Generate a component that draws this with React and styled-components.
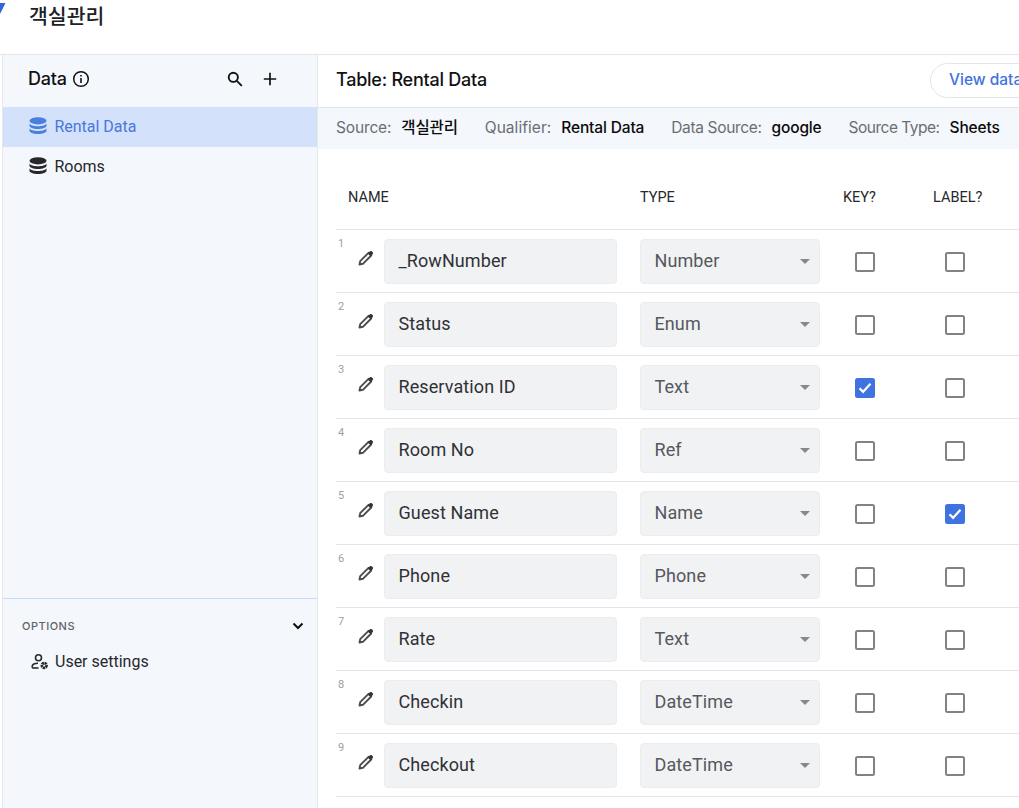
import React from 'react';
import styled, { createGlobalStyle } from 'styled-components';

const Global = createGlobalStyle`
  html, body { margin: 0; padding: 0; height: 100%; overflow: hidden; background: #fff; }
  body { font-family: Roboto, "Noto Sans CJK KR", sans-serif; }
  * { box-sizing: border-box; }
`;

const Page = styled.div`
  width: 1019px; height: 808px; display: flex; flex-direction: column; overflow: hidden; position: relative;
`;
const TopBar = styled.header`
  height: 55px; flex: none; border-bottom: 1px solid #e6e7e9; display: flex; align-items: flex-start;
  padding-left: 29px; position: relative;
`;
const LogoMark = styled.svg`
  position: absolute; left: 0; top: 3px; width: 6px; height: 11px;
`;
const AppTitle = styled.h1`
  margin: 2px 0 0; font: 500 20.5px/26px "Noto Sans CJK KR", sans-serif; color: #202124;
`;
const Body = styled.div`
  flex: 1; display: flex; min-height: 0;
`;
const Sidebar = styled.aside`
  margin-left: 2px; width: 316px; flex: none; background: #f4f7fc;
  border-left: 1px solid #e6e8ec; border-right: 1px solid #e6e8ec; display: flex; flex-direction: column;
`;
const SideHead = styled.div`
  height: 52px; flex: none; display: flex; align-items: center; padding: 0 38px 5px 25px;
`;
const SideTitle = styled.span`
  font: 500 18px/22px Inter, sans-serif; color: #111; margin-right: 5px; letter-spacing: -0.2px;
`;
const Spacer = styled.div` flex: 1; `;
const HeadIconRow = styled.div`
  display: flex; align-items: center; gap: 17px;
`;
const TableItem = styled.div`
  height: 40px; display: flex; align-items: center; gap: 7.5px; padding: 0 0 2px 26px;
  font-size: 16px; letter-spacing: -0.02px; color: ${p => (p.$active ? '#4a77dc' : '#26282b')};
  background: ${p => (p.$active ? '#d3e2fa' : 'transparent')};
`;
const SideFill = styled.div` flex: 1; border-bottom: 1px solid #c6dcf5; `;
const Options = styled.div`
  height: 209px; flex: none; padding: 20px 12px 0 19px;
`;
const OptionsHead = styled.div`
  display: flex; align-items: center; justify-content: space-between;
  font: 500 11px/14px Inter, sans-serif; letter-spacing: 0.5px; color: #5f6368;
`;
const OptionItem = styled.div`
  display: flex; align-items: center; gap: 6px; margin: 19px 0 0 9px; font-size: 16px; color: #26282b;
`;
const Main = styled.main`
  flex: 1; min-width: 0; display: flex; flex-direction: column;
`;
const MainHead = styled.div`
  height: 53px; flex: none; display: flex; align-items: center; justify-content: space-between;
  padding: 0 0 2px 18px; border-bottom: 1px solid #e3e5e8;
`;
const MainTitle = styled.h2`
  margin: 0; font: 500 18px/22px Inter, sans-serif; color: #111; letter-spacing: -0.25px;
`;
const ViewButton = styled.button`
  width: 120px; height: 35px; margin-right: -31px; flex: none; border: 1px solid #e3e5e8; border-radius: 18px; background: #fff;
  color: #3f73e0; font: 500 15.5px/20px Inter, sans-serif; text-align: left; padding: 0 0 0 18px; white-space: nowrap;
`;
const MetaStrip = styled.div`
  height: 41px; flex: none; background: #f4f7fc; display: flex; align-items: center; padding: 0 0 2px 18px;
`;
const MetaItem = styled.div`
  display: flex; align-items: center; gap: 10px; margin-right: 27px; white-space: nowrap;
  font: 400 15.5px/20px Inter, "Noto Sans CJK KR", sans-serif; letter-spacing: -0.15px;
`;
const MetaLabel = styled.span`
  color: #6a6e73; letter-spacing: ${p => p.$spacing || '-0.15px'};
`;
const MetaValue = styled.span` color: #0b0b0b; font-weight: 500; `;
const TableWrap = styled.div`
  margin-left: 18px; flex: 1;
`;
const HeadRow = styled.div`
  height: 81px; display: grid; grid-template-columns: 304px 180px 90px 90px; align-items: center;
  border-bottom: 1px solid #e3e5e8; padding-top: 16px; font-size: 14.5px; color: #26282b;
`;
const HeadCell = styled.div`
  padding-left: ${p => p.$pad || 0}px;
`;
const Row = styled.div`
  height: 63px; display: grid; grid-template-columns: 48px 233px 23px 180px 90px 90px; align-items: center;
  border-bottom: 1px solid #e3e5e8; padding-top: 1px; position: relative;
`;
const RowIndex = styled.span`
  position: absolute; left: 2px; top: 7px; font-size: 11px; line-height: 14px; color: #9aa0a6;
`;
const EditCell = styled.div`
  display: flex; justify-content: flex-start; padding: 0 0 7px 22px;
`;
const NameField = styled.div`
  grid-column: 2; height: 45px; background: #f1f2f4; border: 1px solid #ebecef; border-radius: 4px;
  display: flex; align-items: center; padding: 0 13.5px 2px; font-size: 18px; color: #2f3134; letter-spacing: 0.1px;
`;
const TypeField = styled.div`
  grid-column: 4; height: 45px; background: #f1f2f4; border: 1px solid #ebecef; border-radius: 4px;
  display: flex; align-items: center; justify-content: space-between; padding: 0 9px 2px 13.5px;
  font-size: 18px; color: #55585c; letter-spacing: 0.1px;
`;
const Caret = styled.span`
  width: 0; height: 0; margin-top: 2px; border-left: 5.5px solid transparent; border-right: 5.5px solid transparent;
  border-top: 5.5px solid #85888c;
`;
const CheckCell = styled.div`
  display: flex; justify-content: center; padding-left: 0.5px;
`;
const Box = styled.span`
  width: 20px; height: 20px; border-radius: 2.5px; display: flex; align-items: center; justify-content: center;
  border: ${p => (p.$on ? 'none' : '2px solid #808386')};
  background: ${p => (p.$on ? '#3f73e0' : '#fff')};
`;

const Db = ({ color }) => (
  <svg width="18" height="18" viewBox="0 0 18 18" fill={color}>
    <ellipse cx="9" cy="3.800" rx="8.500" ry="3.600" />
    <path d="M.5 6.400v2.300c0 1.900 3.800 3.200 8.500 3.200s8.500-1.300 8.500-3.200V6.400c-1 1.800-4.600 2.800-8.500 2.800S1.500 8.200.5 6.400z" />
    <path d="M.5 11.300v2.400c0 1.900 3.800 3.200 8.500 3.200s8.500-1.300 8.500-3.200v-2.400c-1 1.800-4.600 2.800-8.500 2.800s-7.500-1-8.500-2.800z" />
  </svg>
);
const Pencil = () => (
  <svg width="16" height="16" viewBox="0 0 16 16">
    <path d="M1.500 14.500l.7-3.400L10.500 2.800l2.700 2.700L4.900 13.800z" fill="none" stroke="#4a4d50" strokeWidth="1.900" strokeLinejoin="round" />
    <path d="M9.800 3.300l1.900-1.900c.6-.6 1.600-.6 2.200 0l.7.7c.6.6.6 1.600 0 2.200l-1.900 1.900z" fill="#333538" />
  </svg>
);

const fields = [
  ['_RowNumber', 'Number'], ['Status', 'Enum'], ['Reservation ID', 'Text', 'key'], ['Room No', 'Ref'],
  ['Guest Name', 'Name', 'label'], ['Phone', 'Phone'], ['Rate', 'Text'], ['Checkin', 'DateTime'], ['Checkout', 'DateTime'],
];

const Check = ({ on }) => (
  <Box $on={on}>
    {on && (
      <svg width="14" height="12" viewBox="0 0 14 12" fill="none" stroke="#fff" strokeWidth="2.200">
        <path d="M1.500 6.200l3.600 3.600 7.400-8" />
      </svg>
    )}
  </Box>
);

export default function App() {
  return (
    <Page>
      <Global />
      <TopBar>
        <LogoMark viewBox="0 0 6 11"><path d="M0 0h5.500L0 11z" fill="#2f66dc" /></LogoMark>
        <AppTitle>객실관리</AppTitle>
      </TopBar>
      <Body>
        <Sidebar>
          <SideHead>
            <SideTitle>Data</SideTitle>
            <svg width="18" height="18" viewBox="0 0 18 18" fill="none" stroke="#111" strokeWidth="1.500">
              <circle cx="9" cy="9" r="7.300" />
              <path d="M9 8v5" strokeWidth="1.600" />
              <path d="M9 5v1.600" strokeWidth="1.600" />
            </svg>
            <Spacer />
            <HeadIconRow>
              <svg width="18" height="18" viewBox="0 0 18 18" fill="none" stroke="#111" strokeWidth="1.900">
                <circle cx="7.300" cy="7.300" r="4.600" />
                <path d="M10.800 10.800l5 5" />
              </svg>
              <svg width="18" height="18" viewBox="0 0 18 18" fill="none" stroke="#111" strokeWidth="1.700">
                <path d="M9 2.800v12.400M2.800 9h12.400" />
              </svg>
            </HeadIconRow>
          </SideHead>
          <TableItem $active><Db color="#4a7fe0" />Rental Data</TableItem>
          <TableItem><Db color="#26282b" />Rooms</TableItem>
          <SideFill />
          <Options>
            <OptionsHead>
              OPTIONS
              <svg width="14" height="10" viewBox="0 0 14 10" fill="none" stroke="#111" strokeWidth="2">
                <path d="M2.500 2.500L7 7l4.500-4.500" />
              </svg>
            </OptionsHead>
            <OptionItem>
              <svg width="18" height="18" viewBox="0 0 18 18" fill="none" stroke="#26282b" strokeWidth="1.600">
                <circle cx="7.500" cy="4.800" r="3" />
                <path d="M1.200 14.800v-1.200c0-2.200 2.700-3.400 5.800-3.400" />
                <path d="M1.200 15h6.300" />
                <circle cx="13.200" cy="12.500" r="2.300" strokeWidth="2.800" strokeDasharray="2 .5" />
              </svg>
              User settings
            </OptionItem>
          </Options>
        </Sidebar>
        <Main>
          <MainHead>
            <MainTitle>Table: Rental Data</MainTitle>
            <ViewButton>View data</ViewButton>
          </MainHead>
          <MetaStrip>
            <MetaItem><MetaLabel>Source:</MetaLabel><MetaValue>객실관리</MetaValue></MetaItem>
            <MetaItem><MetaLabel $spacing="0.05px">Qualifier:</MetaLabel><MetaValue>Rental Data</MetaValue></MetaItem>
            <MetaItem><MetaLabel $spacing="-0.35px">Data Source:</MetaLabel><MetaValue>google</MetaValue></MetaItem>
            <MetaItem><MetaLabel $spacing="-0.5px">Source Type:</MetaLabel><MetaValue>Sheets</MetaValue></MetaItem>
          </MetaStrip>
          <TableWrap>
            <HeadRow>
              <HeadCell $pad={12}>NAME</HeadCell>
              <HeadCell>TYPE</HeadCell>
              <HeadCell $pad={23}>KEY?</HeadCell>
              <HeadCell $pad={23}>LABEL?</HeadCell>
            </HeadRow>
            {fields.map(([name, type, flag], i) => (
              <Row key={name}>
                <RowIndex>{i + 1}</RowIndex>
                <EditCell><Pencil /></EditCell>
                <NameField>{name}</NameField>
                <TypeField>{type}<Caret /></TypeField>
                <CheckCell><Check on={flag === 'key'} /></CheckCell>
                <CheckCell><Check on={flag === 'label'} /></CheckCell>
              </Row>
            ))}
          </TableWrap>
        </Main>
      </Body>
    </Page>
  );
}
